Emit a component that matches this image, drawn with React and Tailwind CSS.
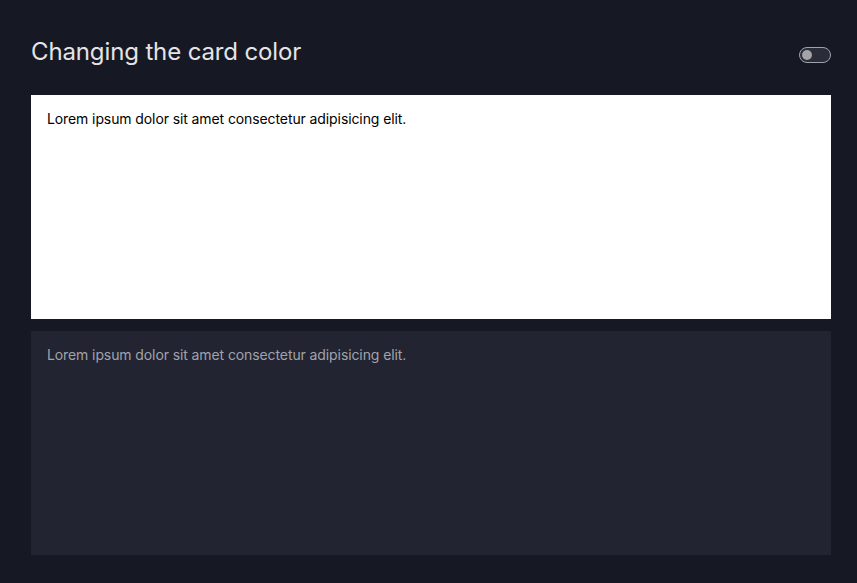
export default function App() {
  return (
    <div className="min-h-screen bg-[#161824] px-[31px] pt-[36px] pb-7" style={{ fontFamily: 'Inter, "Noto Sans", sans-serif' }}>
      <div className="w-[800px]">
        <div className="flex items-center justify-between h-[32px]">
          <h1 className="text-2xl text-[#e4e4e7] font-normal tracking-[-0.13px]">Changing the card color</h1>
          <button className="w-[32px] h-[16px] rounded-full border border-[#9ca3af] bg-[#2a2d39] flex items-center px-[2px] mt-[6px]">
            <span className="w-[10px] h-[10px] rounded-full bg-[#a3a3a8]"></span>
          </button>
        </div>
        <div className="mt-[27px] flex flex-col gap-3">
          <div className="h-[224px] bg-white px-4 pt-[14px]">
            <p className="text-sm text-black tracking-[-0.1px]">Lorem ipsum dolor sit amet consectetur adipisicing elit.</p>
          </div>
          <div className="h-[224px] bg-[#222431] px-4 pt-[14px]">
            <p className="text-sm text-[#a1a3ab] tracking-[-0.1px]">Lorem ipsum dolor sit amet consectetur adipisicing elit.</p>
          </div>
        </div>
      </div>
    </div>
  )
}
